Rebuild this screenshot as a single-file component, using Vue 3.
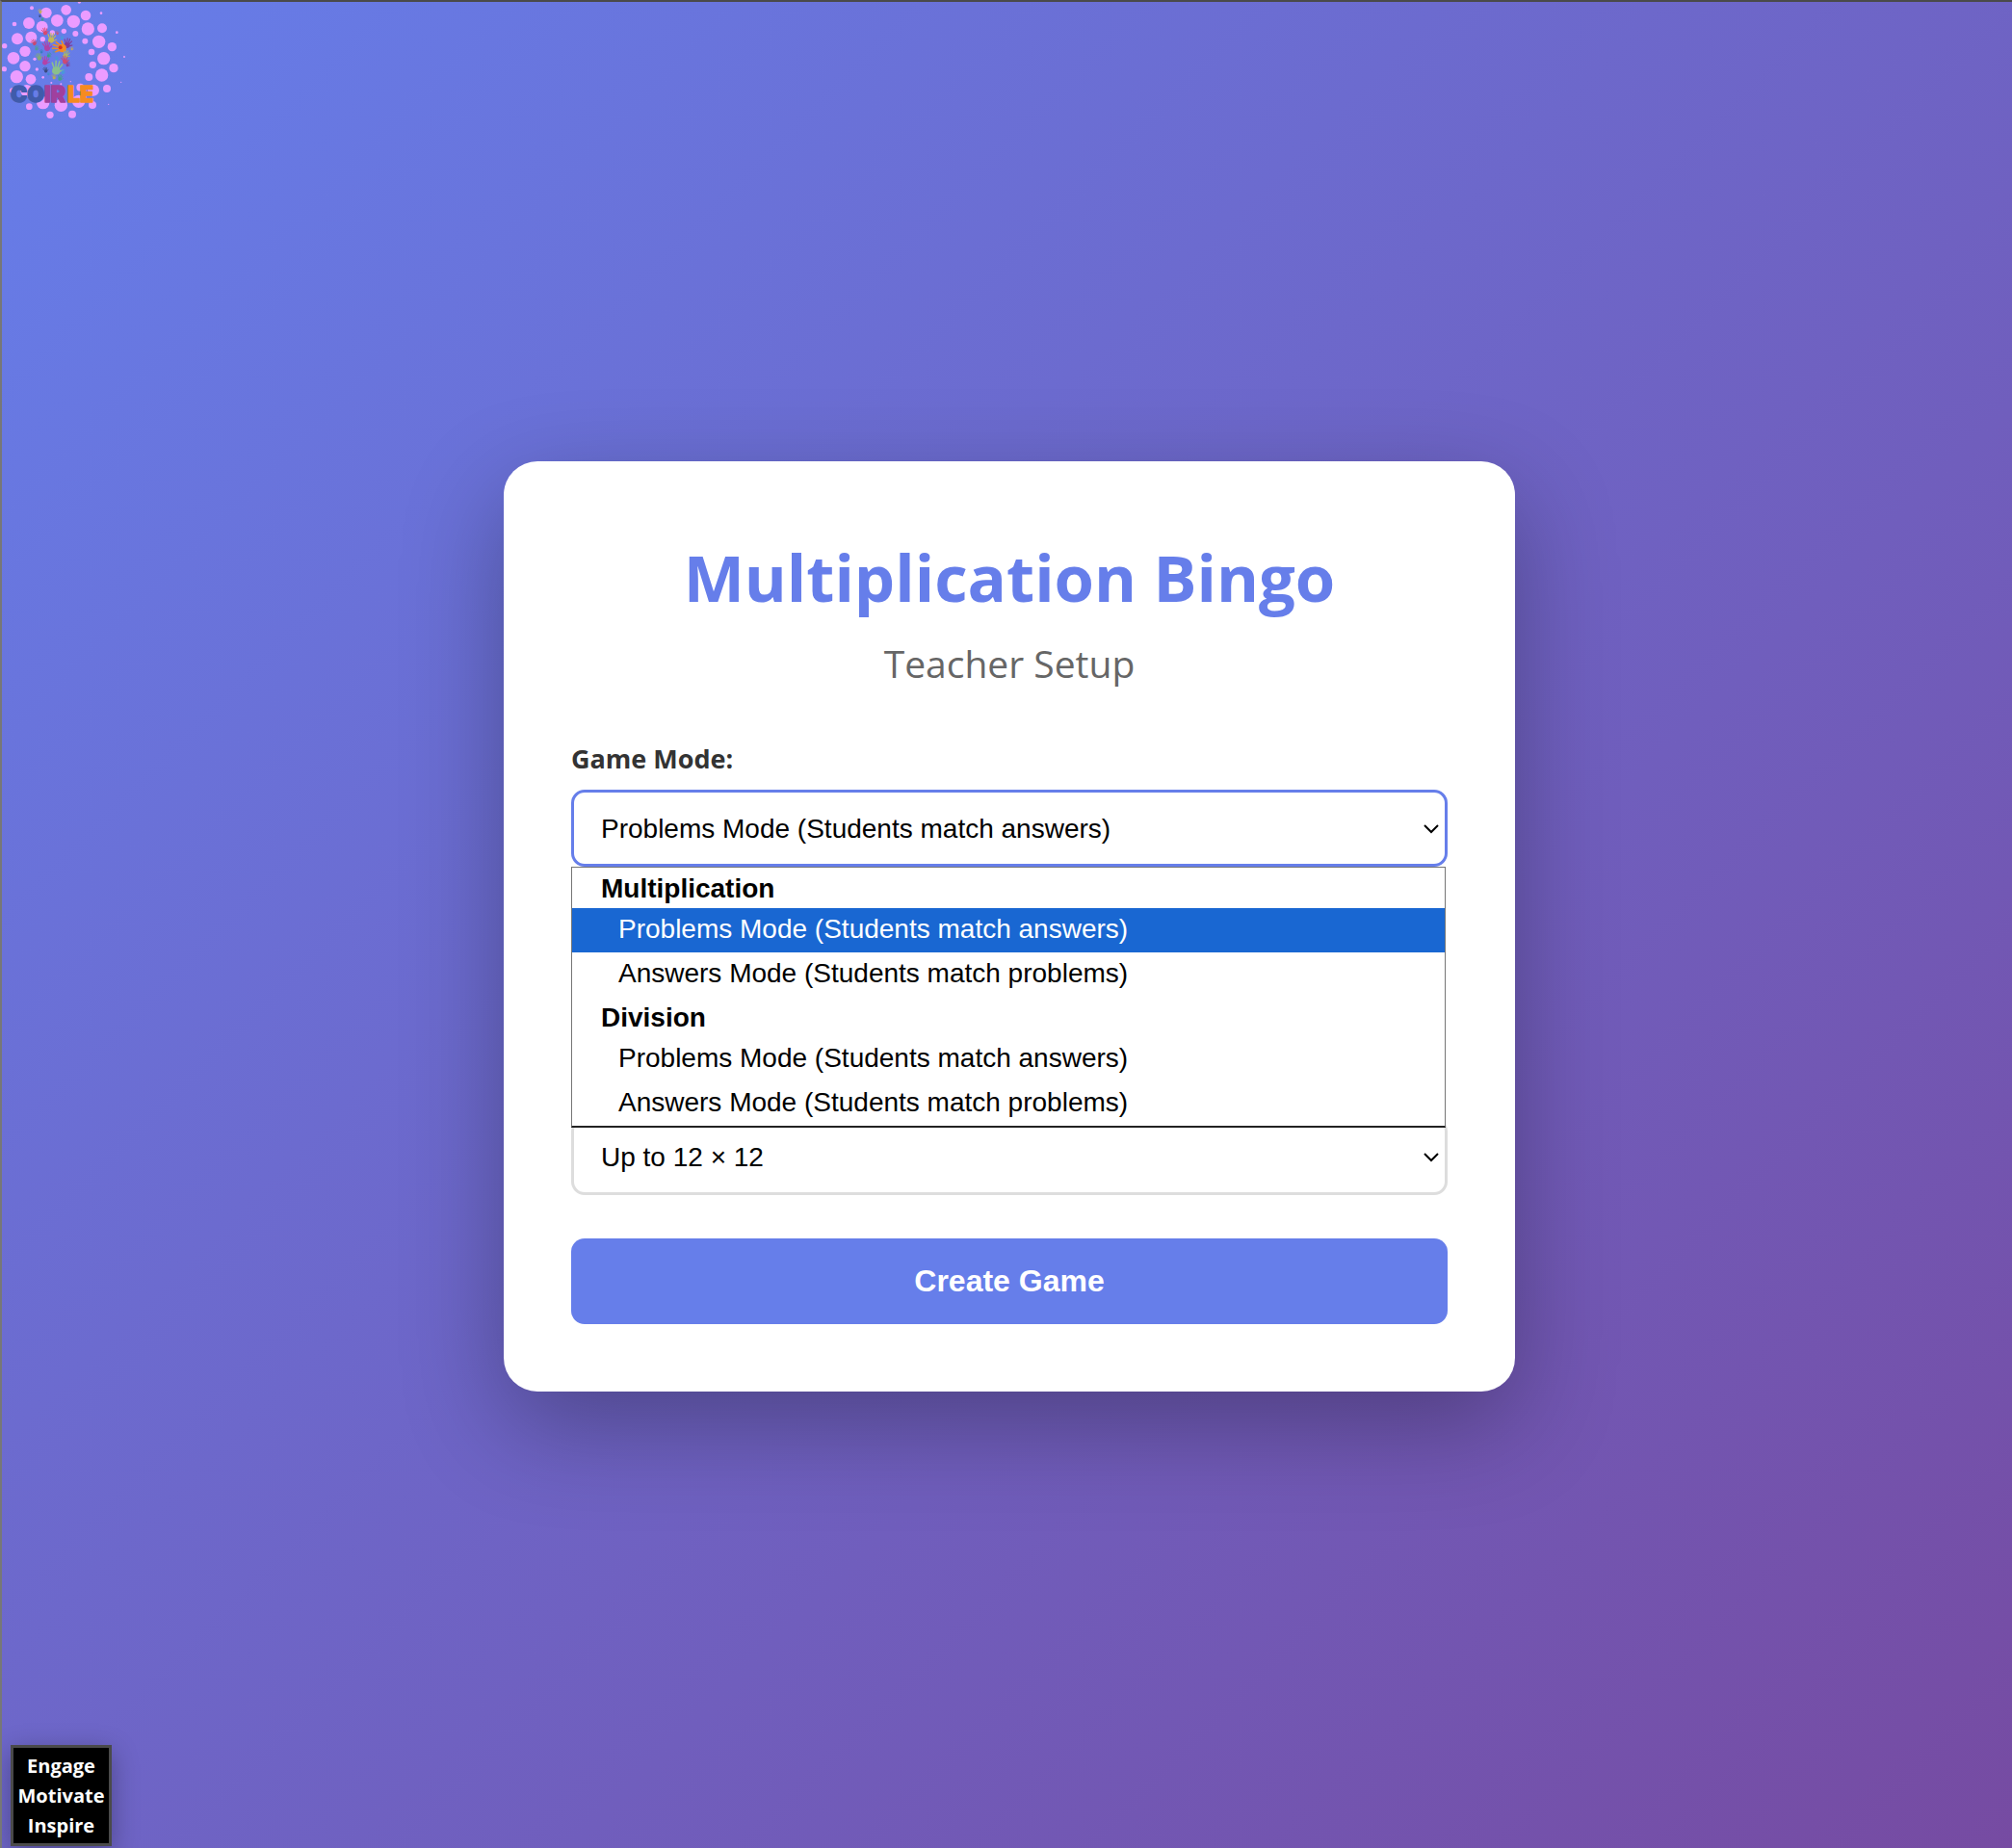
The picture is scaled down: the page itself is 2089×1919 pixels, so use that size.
<script setup>
import { ref } from 'vue'

const modeGroups = [
  {
    label: 'Multiplication',
    options: [
      { value: 'mul-problems', text: 'Problems Mode (Students match answers)' },
      { value: 'mul-answers', text: 'Answers Mode (Students match problems)' }
    ]
  },
  {
    label: 'Division',
    options: [
      { value: 'div-problems', text: 'Problems Mode (Students match answers)' },
      { value: 'div-answers', text: 'Answers Mode (Students match problems)' }
    ]
  }
]

const gameMode = ref('mul-problems')
const maxNumber = ref('12')
const menuOpen = ref(true)

const pickMode = (value) => {
  gameMode.value = value
  menuOpen.value = false
}

// logo bubbles: [x, y, radius]
const bubbles = [
  [99, 25, 6], [144, 40, 17], [206, 31, 16], [247, 6, 5], [267, 48, 16], [315, 41, 4],
  [45, 75, 7], [90, 72, 18], [131, 83, 18], [178, 64, 19], [229, 67, 20], [274, 90, 20],
  [318, 88, 15], [364, 101, 4], [54, 121, 18], [97, 116, 18], [199, 97, 8], [235, 105, 9],
  [265, 128, 9], [308, 130, 20], [349, 146, 14], [14, 143, 8], [78, 160, 17], [42, 181, 19],
  [285, 162, 10], [323, 182, 20], [387, 177, 3], [354, 212, 14], [289, 202, 11], [78, 206, 17],
  [13, 215, 8], [52, 239, 20], [96, 247, 16], [277, 240, 12], [317, 234, 20], [377, 256, 2],
  [333, 276, 12], [38, 282, 8], [83, 283, 19], [250, 272, 12], [291, 281, 18], [91, 332, 10],
  [134, 320, 20], [190, 328, 20], [245, 316, 20], [288, 327, 12], [156, 358, 11], [225, 356, 12],
  [338, 325, 2], [115, 216, 5], [134, 241, 4], [160, 258, 3], [108, 184, 5], [133, 122, 8],
  [163, 102, 8], [190, 262, 3], [220, 254, 2]
]

// logo handprints: [x, y, scale, rotation, colour]
const hands = [
  [125, 36, 8, -20, '#c9ad55'], [132, 60, 6, 20, '#3f9a8b'], [124, 50, 5, 0, '#34487e'], [140, 99, 13, -15, '#d8486f'],
  [106, 133, 11, -30, '#c94872'], [160, 120, 18, 10, '#c5b855'], [146, 145, 18, -10, '#ad43a8'],
  [210, 136, 18, 15, '#823b98'], [187, 149, 25, -80, '#f58a21'], [114, 150, 9, 10, '#4f9c99'],
  [121, 178, 13, -20, '#80a879'], [141, 190, 16, 10, '#b442a8'], [205, 170, 15, 20, '#a8b46c'],
  [202, 188, 15, -10, '#cd4b73'], [176, 213, 25, 10, '#8abf8c'], [142, 219, 10, -20, '#394b80'],
  [211, 201, 9, 20, '#8544a0'], [168, 240, 9, -10, '#b9ad55'], [187, 243, 11, 10, '#42a387'],
  [152, 172, 9, 30, '#379d8d'], [176, 181, 8, -30, '#4a96d8'], [196, 224, 9, 20, '#479bd9'],
  [178, 103, 7, -30, '#c65780'], [193, 117, 7, 10, '#469bdc'], [129, 161, 7, 0, '#377dbe'],
  [168, 160, 8, 20, '#5587cf'], [224, 152, 6, 10, '#c4a558'], [151, 230, 6, 10, '#3e8dcc']
]
</script>

<template>
  <main class="page">
    <svg class="logo" viewBox="0 0 420 405" role="img" aria-label="Coirle">
      <defs>
        <g id="hand">
          <ellipse cx="0" cy="0.3" rx="0.5" ry="0.48" stroke="none" />
          <path
            d="M-0.25 0.1 L-0.65 -0.6 M-0.1 0 L-0.22 -0.9 M0.12 0 L0.22 -0.9 M0.25 0.1 L0.62 -0.6 M0.3 0.4 L0.85 0.05"
            stroke-width="0.19" stroke-linecap="round" fill="none"
          />
        </g>
      </defs>
      <circle v-for="(b, i) in bubbles" :key="i" :cx="b[0]" :cy="b[1]" :r="b[2]" fill="#eb9cff" />
      <use
        v-for="(h, i) in hands"
        :key="'h' + i"
        href="#hand"
        :transform="`translate(${h[0]} ${h[1]}) rotate(${h[3]}) scale(${h[2]})`"
        :fill="h[4]"
        :stroke="h[4]"
      />
      <circle cx="188" cy="148" r="6" fill="#d92f20" />
      <g class="logo-text">
        <text x="33" y="318" fill="#405bab" stroke="#405bab">CO</text>
        <text x="138" y="318" fill="#a0409e" stroke="#a0409e">IR</text>
        <text x="210" y="318" fill="#f68b1f" stroke="#f68b1f">LE</text>
      </g>
    </svg>

    <section class="card">
      <h1>Multiplication Bingo</h1>
      <p class="subtitle">Teacher Setup</p>

      <form @submit.prevent>
        <div class="form-group mode">
          <label for="game-mode">Game Mode:</label>
          <div class="select-wrap">
            <select
              id="game-mode"
              v-model="gameMode"
              :class="{ open: menuOpen }"
              @mousedown.prevent="menuOpen = !menuOpen"
            >
              <optgroup v-for="group in modeGroups" :key="group.label" :label="group.label">
                <option v-for="opt in group.options" :key="opt.value" :value="opt.value">{{ opt.text }}</option>
              </optgroup>
            </select>
            <svg class="chevron" viewBox="0 0 16 10" aria-hidden="true"><path d="M1 1 L8 8 L15 1" /></svg>

            <div v-if="menuOpen" class="menu" role="listbox" aria-label="Game Mode">
              <div v-for="group in modeGroups" :key="group.label" role="group" :aria-label="group.label">
                <div class="menu-label">{{ group.label }}</div>
                <div
                  v-for="opt in group.options"
                  :key="opt.value"
                  class="menu-option"
                  :class="{ selected: opt.value === gameMode }"
                  role="option"
                  :aria-selected="opt.value === gameMode"
                  @click="pickMode(opt.value)"
                >
                  {{ opt.text }}
                </div>
              </div>
            </div>
          </div>
        </div>

        <div class="form-group">
          <div class="select-wrap">
            <select id="max-number" v-model="maxNumber" aria-label="Number range">
              <option value="12">Up to 12 × 12</option>
            </select>
            <svg class="chevron" viewBox="0 0 16 10" aria-hidden="true"><path d="M1 1 L8 8 L15 1" /></svg>
          </div>
        </div>

        <button type="submit" class="create-btn">Create Game</button>
      </form>
    </section>

    <aside class="badge">
      <span>Engage</span>
      <span>Motivate</span>
      <span>Inspire</span>
    </aside>
  </main>
</template>

<style>
body {
  margin: 0;
}
</style>

<style scoped>
.page {
  position: relative;
  box-sizing: border-box;
  min-height: 100vh;
  display: flex;
  align-items: center;
  justify-content: center;
  padding: 3px 0 0 5px;
  border-top: 2px solid #4a4a4a;
  border-left: 2px solid #777;
  background: linear-gradient(135deg, #667eea 0%, #764ba2 100%) border-box;
  font-family: "Open Sans", "Noto Sans", sans-serif;
  overflow: hidden;
}

.logo {
  position: absolute;
  top: -2px;
  left: -2px;
  width: 140px;
  height: 135px;
  clip-path: inset(2px 0 0 2px);
}

.logo-text {
  font-family: Inter, sans-serif;
  font-weight: 900;
  font-size: 69px;
  stroke-width: 4px;
  stroke-linejoin: round;
}

.card {
  box-sizing: border-box;
  width: 100%;
  max-width: 1050px;
  padding: 70px;
  background: #fff;
  border-radius: 35px;
  box-shadow: 0 35px 105px rgba(0, 0, 0, 0.3);
}

h1 {
  margin: 0 0 12px;
  color: #667eea;
  font-size: 67px;
  line-height: 100px;
  font-weight: 700;
  text-align: center;
}

.subtitle {
  margin: 0 0 52px;
  color: #666;
  font-size: 39px;
  line-height: 56px;
  text-align: center;
}

.form-group {
  margin-bottom: 45px;
}

.form-group.mode {
  margin-bottom: 261px;
}

label {
  display: block;
  margin-bottom: 14px;
  color: #333;
  font-size: 27px;
  line-height: 37px;
  font-weight: 700;
}

.select-wrap {
  position: relative;
}

select {
  display: block;
  appearance: none;
  box-sizing: border-box;
  width: 100%;
  height: 80px;
  padding: 0 28px;
  background: #fff;
  border: 3px solid #ddd;
  border-radius: 14px;
  color: #000;
  font-family: "Liberation Sans", Arial, sans-serif;
  font-size: 28px;
  outline: none;
}

select.open,
select:focus {
  border-color: #667eea;
}

.chevron {
  position: absolute;
  top: 36px;
  right: 9px;
  width: 16px;
  height: 10px;
  fill: none;
  stroke: #000;
  stroke-width: 2;
  pointer-events: none;
}

.menu {
  position: absolute;
  z-index: 2;
  top: 100%;
  left: 0;
  right: 2px;
  background: #fff;
  border: 1px solid #767676;
  border-bottom: 2px solid #222;
  font-family: "Liberation Sans", Arial, sans-serif;
  font-size: 28px;
  color: #000;
}

.menu-label {
  padding: 2px 30px 0;
  line-height: 40px;
  font-weight: 700;
}

.menu-option {
  padding: 0 48px 2px;
  line-height: 44px;
  cursor: default;
}

.menu-option.selected {
  background: #1967d2;
  color: #fff;
}

.create-btn {
  display: block;
  width: 100%;
  height: 89px;
  background: #667eea;
  border: none;
  border-radius: 14px;
  color: #fff;
  font-family: "Liberation Sans", Arial, sans-serif;
  font-size: 32px;
  font-weight: 700;
  cursor: pointer;
}

.badge {
  position: absolute;
  left: 9px;
  bottom: 2px;
  box-sizing: border-box;
  width: 105px;
  height: 105px;
  display: flex;
  flex-direction: column;
  align-items: center;
  justify-content: center;
  background: #000;
  border: 3px solid #4a4a4a;
  box-shadow: 0 7px 26px rgba(0, 0, 0, 0.3);
  color: #fff;
  font-size: 20px;
  line-height: 31px;
  font-weight: 700;
}
</style>
